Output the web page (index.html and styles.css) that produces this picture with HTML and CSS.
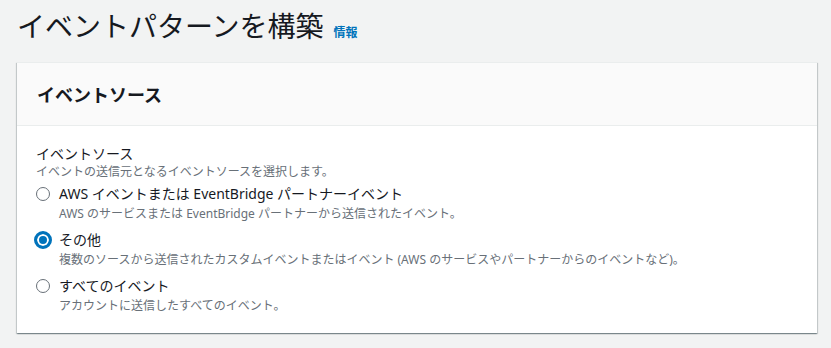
FILE: index.html
```html
<!DOCTYPE html>
<html lang="ja">
<head>
    <meta charset="UTF-8">
    <title>イベントパターンを構築</title>
    <link rel="stylesheet" href="styles.css">
</head>
<body>
    <div class="page">
        <h1 class="page-title">イベントパターンを構築<a class="info-link" href="#">情報</a></h1>

        <div class="card">
            <div class="card-header">
                <h2>イベントソース</h2>
            </div>
            <div class="card-body">
                <div class="field-label">イベントソース</div>
                <div class="field-desc">イベントの送信元となるイベントソースを選択します。</div>

                <div class="radio-group">
                    <label class="radio-option">
                        <span class="radio"></span>
                        <span class="radio-text">
                            <span class="radio-label">AWS イベントまたは EventBridge パートナーイベント</span>
                            <span class="radio-desc">AWS のサービスまたは EventBridge パートナーから送信されたイベント。</span>
                        </span>
                    </label>
                    <label class="radio-option">
                        <span class="radio checked"></span>
                        <span class="radio-text">
                            <span class="radio-label">その他</span>
                            <span class="radio-desc">複数のソースから送信されたカスタムイベントまたはイベント (AWS のサービスやパートナーからのイベントなど)。</span>
                        </span>
                    </label>
                    <label class="radio-option">
                        <span class="radio"></span>
                        <span class="radio-text">
                            <span class="radio-label">すべてのイベント</span>
                            <span class="radio-desc">アカウントに送信したすべてのイベント。</span>
                        </span>
                    </label>
                </div>
            </div>
        </div>
    </div>
</body>
</html>
```

FILE: styles.css
```css
body {
    margin: 0;
    background-color: #f2f3f3;
    font-family: "Noto Sans", "Noto Sans CJK JP", sans-serif;
    color: #16191f;
}
.page {
    padding: 4px 14px 14px 17px;
}
.page-title {
    margin: 0 0 14px 0;
    font-size: 28px;
    font-weight: 400;
    line-height: 44px;
    display: flex;
    align-items: baseline;
}
.info-link {
    margin-left: 10px;
    font-size: 12px;
    font-weight: 700;
    line-height: 16px;
    color: #0073bb;
    text-decoration: none;
}
.card {
    background-color: #fff;
    border-top: 1px solid #eaeded;
    box-shadow: 0 1px 1px 0 rgba(0, 28, 36, 0.3), 1px 1px 1px 0 rgba(0, 28, 36, 0.15), -1px 1px 1px 0 rgba(0, 28, 36, 0.15);
}
.card-header {
    background-color: #fafafa;
    border-bottom: 1px solid #eaeded;
    padding: 0 20px;
    height: 62px;
    display: flex;
    align-items: center;
}
.card-header h2 {
    margin: 0;
    font-size: 18px;
    font-weight: 700;
}
.card-body {
    padding: 18px 20px 18px 19px;
}
.field-label {
    font-size: 14px;
    line-height: 20px;
}
.field-desc {
    font-size: 12px;
    line-height: 16px;
    color: #687078;
}
.radio-group {
    display: flex;
    flex-direction: column;
    gap: 6px;
    margin-top: 3px;
}
.radio-option {
    display: flex;
    gap: 9px;
}
.radio {
    flex: none;
    width: 14px;
    height: 14px;
    margin-top: 4px;
    border: 1px solid #687078;
    border-radius: 50%;
    box-sizing: border-box;
}
.radio.checked {
    width: 18px;
    height: 18px;
    margin: 2px -2px 0 -2px;
    border: 3px solid #0073bb;
    background-color: #0073bb;
    box-shadow: inset 0 0 0 2px #fff;
}
.radio-text {
    display: flex;
    flex-direction: column;
}
.radio-label {
    font-size: 14px;
    line-height: 22px;
}
.radio-desc {
    font-size: 12px;
    line-height: 18px;
    color: #687078;
}
```
